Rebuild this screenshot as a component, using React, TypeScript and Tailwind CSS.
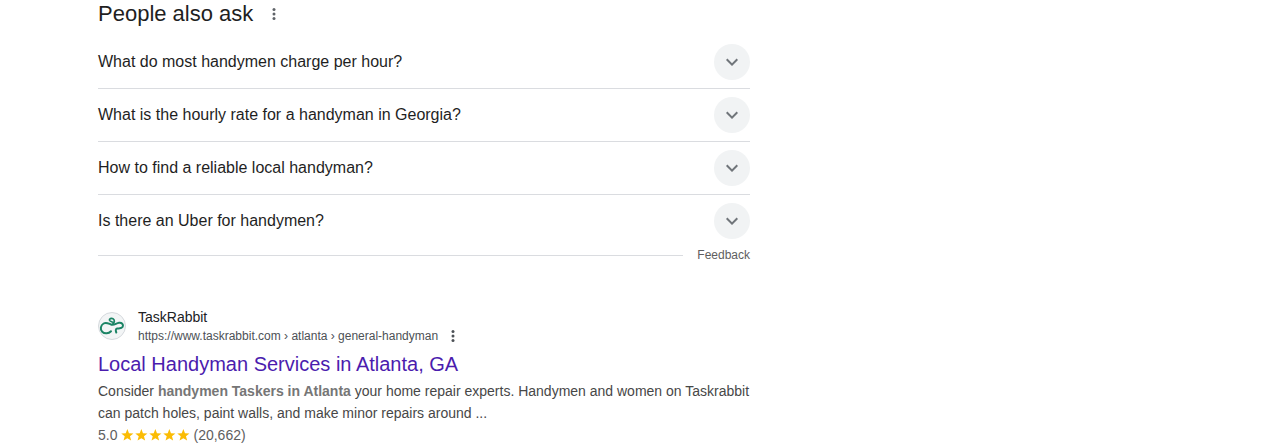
const questions = [
  'What do most handymen charge per hour?',
  'What is the hourly rate for a handyman in Georgia?',
  'How to find a reliable local handyman?',
  'Is there an Uber for handymen?',
];

function Dots({ className }: { className: string }) {
  return (
    <svg viewBox="0 0 4 12" className={className} fill="currentColor">
      <circle cx="2" cy="1.5" r="1.5" />
      <circle cx="2" cy="6" r="1.5" />
      <circle cx="2" cy="10.5" r="1.5" />
    </svg>
  );
}

function Question({ text, last }: { text: string; last: boolean }) {
  return (
    <li className={`flex items-center justify-between ${last ? 'h-[52px]' : 'h-[53px] border-b border-[#dadce0]'}`}>
      <span className="text-base leading-6 whitespace-nowrap text-[#1f1f1f]">{text}</span>
      <button aria-label="Expand" className="flex size-9 items-center justify-center rounded-full bg-[#f1f3f4]">
        <svg viewBox="0 0 24 24" className="size-6 text-[#70757a]" fill="currentColor">
          <path d="M7.41 8.59 12 13.17l4.59-4.58L18 10l-6 6-6-6z" />
        </svg>
      </button>
    </li>
  );
}

function Logo() {
  return (
    <div className="mb-px flex size-7 items-center justify-center rounded-full border border-[#d5d9dd] bg-[#f3f5f6]">
      <svg viewBox="0 0 26 26" className="size-[26px] shrink-0" fill="none" stroke="#1c8465" strokeWidth="2" strokeLinecap="round" strokeLinejoin="round">
        <path d="M12 18.2C9.7 20.7 5.6 21.2 3.2 18.8C0.9 16.5 1.6 12.2 4.6 10.5C7.6 8.8 10 10.9 12.5 11.7C15.2 12.6 17.1 10.1 20 9.7C22.7 9.3 24.8 11.4 23.7 13.7C22.6 15.6 20.1 15.2 18.2 15.6C16.4 16 16.6 17.8 17.3 19.5" />
        <path d="M13.4 11.2C15.9 9.8 15.9 6.8 14 5.7C12.3 4.8 10 5.9 10.5 7.3C11 8.6 13 8.6 14.2 9.5" strokeWidth="1.7" />
      </svg>
    </div>
  );
}

function Star() {
  return (
    <svg viewBox="0 0 24 24" className="size-3.5" fill="#fbbc04">
      <path d="M12.6 1.6 15.4 8.9 23 9.3 17.1 14.2 19.1 21.6 12.6 17.5 6.1 21.6 8.1 14.2 2.2 9.3 9.8 8.9z" />
    </svg>
  );
}

export default function App() {
  return (
    <main className="h-[445px] overflow-hidden bg-white pl-[98px] font-['Liberation_Sans',Arial,sans-serif]">
      <div className="w-[652px]">
        <section>
          <header className="flex h-9 items-start">
            <h2 className="w-[172px] text-[22px] leading-7 whitespace-nowrap text-[#1f1f1f]">People also ask</h2>
            <button aria-label="About this result" className="flex h-7 items-center">
              <Dots className="ml-0.5 h-3 w-1 text-[#5f6368]" />
            </button>
          </header>
          <ul>
            {questions.map((q, i) => (
              <Question key={q} text={q} last={i === questions.length - 1} />
            ))}
          </ul>
          <div className="flex h-4 items-center gap-3.5">
            <div className="mt-px h-px flex-1 bg-[#dadce0]" />
            <a className="text-xs leading-4 text-[#5e5e5e]">Feedback</a>
          </div>
        </section>

        <article className="pt-11">
          <div className="flex items-center gap-3">
            <Logo />
            <div>
              <div className="text-sm leading-5 text-[#202124]">TaskRabbit</div>
              <div className="flex h-[18px] items-center">
                <cite className="text-xs leading-[18px] whitespace-nowrap text-[#4d5156] not-italic">https://www.taskrabbit.com › atlanta › general-handyman</cite>
                <Dots className="ml-[13px] h-3 w-1 text-[#4d5156]" />
              </div>
            </div>
          </div>
          <h3 className="pt-1.5 text-xl leading-[26px] whitespace-nowrap text-[#4b1cae]">Local Handyman Services in Atlanta, GA</h3>
          <p className="mt-[3px] text-sm leading-[22px] whitespace-nowrap text-[#474747]">
            Consider <b className="text-[#767676]">handymen Taskers in Atlanta</b> your home repair experts. Handymen and women on Taskrabbit
            <br />
            can patch holes, paint walls, and make minor repairs around ...
          </p>
          <div className="flex h-[22px] items-center text-sm leading-[22px] text-[#5e5e5e]">
            <span>5.0</span>
            <span className="mx-[3px] flex pb-px">
              <Star />
              <Star />
              <Star />
              <Star />
              <Star />
            </span>
            <span>(20,662)</span>
          </div>
        </article>
      </div>
    </main>
  );
}
